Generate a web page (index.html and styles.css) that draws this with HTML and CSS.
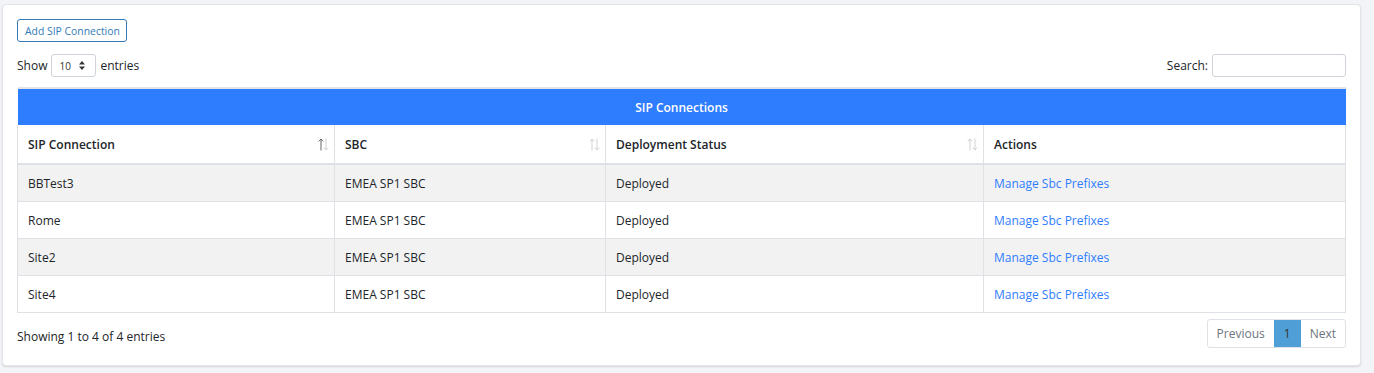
FILE: index.html
```html
<!DOCTYPE html>
<html>
<head>
  <meta charset="UTF-8" />
  <title>SIP Connections</title>
  <link rel="stylesheet" href="styles.css">
</head>
<body>

<div class="card">
  <!-- Toolbar -->
  <div class="toolbar">
    <button class="btn-add">Add SIP Connection</button>
  </div>

  <!-- Length / search row -->
  <div class="table-controls">
    <label class="length">
      Show
      <span class="select">
        <span>10</span>
        <svg class="select-arrows" width="6" height="9" viewBox="0 0 6 9">
          <path d="M0 3.5 L3 0 L6 3.5 Z M0 5.5 L3 9 L6 5.5 Z" fill="#333"/>
        </svg>
      </span>
      entries
    </label>
    <label class="search">
      Search:
      <span class="search-input"></span>
    </label>
  </div>

  <table class="data-table">
    <thead>
      <tr class="caption-row">
        <th colspan="4">SIP Connections</th>
      </tr>
      <tr class="head-row">
        <th class="col1">SIP Connection
          <svg class="sort" width="11" height="13" viewBox="0 0 11 13">
            <path d="M3 12.5 V1 M0.8 3.4 L3 1 L5.2 3.4" stroke="#666" fill="none"/>
            <path d="M8 0.5 V12 M5.8 9.6 L8 12 L10.2 9.6" stroke="#cfd1d4" fill="none"/>
          </svg>
        </th>
        <th class="col2">SBC
          <svg class="sort" width="11" height="13" viewBox="0 0 11 13">
            <path d="M3 12.5 V1 M0.8 3.4 L3 1 L5.2 3.4" stroke="#cfd1d4" fill="none"/>
            <path d="M8 0.5 V12 M5.8 9.6 L8 12 L10.2 9.6" stroke="#cfd1d4" fill="none"/>
          </svg>
        </th>
        <th class="col3">Deployment Status
          <svg class="sort" width="11" height="13" viewBox="0 0 11 13">
            <path d="M3 12.5 V1 M0.8 3.4 L3 1 L5.2 3.4" stroke="#cfd1d4" fill="none"/>
            <path d="M8 0.5 V12 M5.8 9.6 L8 12 L10.2 9.6" stroke="#cfd1d4" fill="none"/>
          </svg>
        </th>
        <th class="col4">Actions</th>
      </tr>
    </thead>
    <tbody>
      <tr>
        <td>BBTest3</td>
        <td>EMEA SP1 SBC</td>
        <td>Deployed</td>
        <td><a href="#">Manage Sbc Prefixes</a></td>
      </tr>
      <tr>
        <td>Rome</td>
        <td>EMEA SP1 SBC</td>
        <td>Deployed</td>
        <td><a href="#">Manage Sbc Prefixes</a></td>
      </tr>
      <tr>
        <td>Site2</td>
        <td>EMEA SP1 SBC</td>
        <td>Deployed</td>
        <td><a href="#">Manage Sbc Prefixes</a></td>
      </tr>
      <tr>
        <td>Site4</td>
        <td>EMEA SP1 SBC</td>
        <td>Deployed</td>
        <td><a href="#">Manage Sbc Prefixes</a></td>
      </tr>
    </tbody>
  </table>

  <!-- Info + paging -->
  <div class="table-footer">
    <div class="info">Showing 1 to 4 of 4 entries</div>
    <div class="paging">
      <span class="page-btn">Previous</span>
      <span class="page-btn current">1</span>
      <span class="page-btn">Next</span>
    </div>
  </div>
</div>

</body>
</html>
```

FILE: styles.css
```css
/* Page background */
body {
  margin: 0;
  padding: 4px 13px 8px 2px;
  background-color: #f3f4f7;
  font-family: "Open Sans", "Liberation Sans", sans-serif;
  font-size: 12px;
  color: #212529;
}

/* White card that holds everything */
.card {
  background-color: #fff;
  border: 1px solid #e3e5ea;
  border-radius: 4px;
  box-shadow: 0 1px 2px rgba(0, 0, 0, 0.12);
  padding: 14px 14px 17px 14px;
}

/* Add button */
.toolbar {
  display: flex;
  margin-bottom: 12px;
}

.btn-add {
  font-family: inherit;
  font-size: 10.4px;
  color: #337ab7;
  background: #fff;
  border: 1px solid #337ab7;
  border-radius: 3px;
  height: 23px;
  padding: 0 6px 0 7px;
  line-height: 20px;
}

/* Show entries / search row */
.table-controls {
  display: flex;
  justify-content: space-between;
  align-items: center;
  margin-bottom: 10px;
}

.length,
.search {
  display: flex;
  align-items: center;
  gap: 4px;
}

.select {
  display: flex;
  align-items: center;
  justify-content: space-between;
  width: 45px;
  height: 23px;
  box-sizing: border-box;
  border: 1px solid #ced4da;
  border-radius: 3px;
  padding: 0 10px 0 7px;
  font-size: 10px;
  color: #333;
}

.search-input {
  display: block;
  width: 134px;
  height: 23px;
  box-sizing: border-box;
  border: 1px solid #ced4da;
  border-radius: 3px;
}

/* Table */
.data-table {
  width: 100%;
  border-collapse: collapse;
  border-top: 2px solid #e2e4e7;
}

.caption-row th {
  background-color: #2f7dff;
  color: #fff;
  font-weight: 600;
  text-align: center;
  height: 36px;
  padding: 0;
}

.head-row th {
  text-align: left;
  font-weight: 600;
  height: 37px;
  padding: 1px 10px 0 10px;
  border-left: 1px solid #dee2e6;
  border-right: 1px solid #dee2e6;
  border-bottom: 2px solid #dee2e6;
  position: relative;
}

.col1 { width: 296px; }
.col2 { width: 250px; }
.col3 { width: 357px; }

/* Sort arrows sit on top of the header cell's right edge */
.sort {
  position: absolute;
  right: 5px;
  top: 13px;
}

.data-table td {
  height: 36px;
  padding: 0 10px;
  border: 1px solid #dee2e6;
  border-top: none;
}

.data-table tbody tr:nth-child(odd) td {
  background-color: #f2f2f2;
}

.data-table a {
  color: #2f7dff;
  text-decoration: none;
}

/* Footer */
.table-footer {
  display: flex;
  justify-content: space-between;
  align-items: center;
  margin-top: 6px;
}

.info {
  padding-top: 6px;
}

.paging {
  display: flex;
  border: 1px solid #dee2e6;
  border-radius: 3px;
  overflow: hidden;
  height: 27px;
}

.page-btn {
  display: flex;
  align-items: center;
  padding: 0 9px;
  color: #6c757d;
}

.page-btn + .page-btn {
  border-left: 1px solid #dee2e6;
}

.page-btn.current {
  background-color: #509ed6;
  color: #333;
  border-left: none;
  padding: 0 10px;
}

.page-btn.current + .page-btn {
  border-left: none;
}
```
